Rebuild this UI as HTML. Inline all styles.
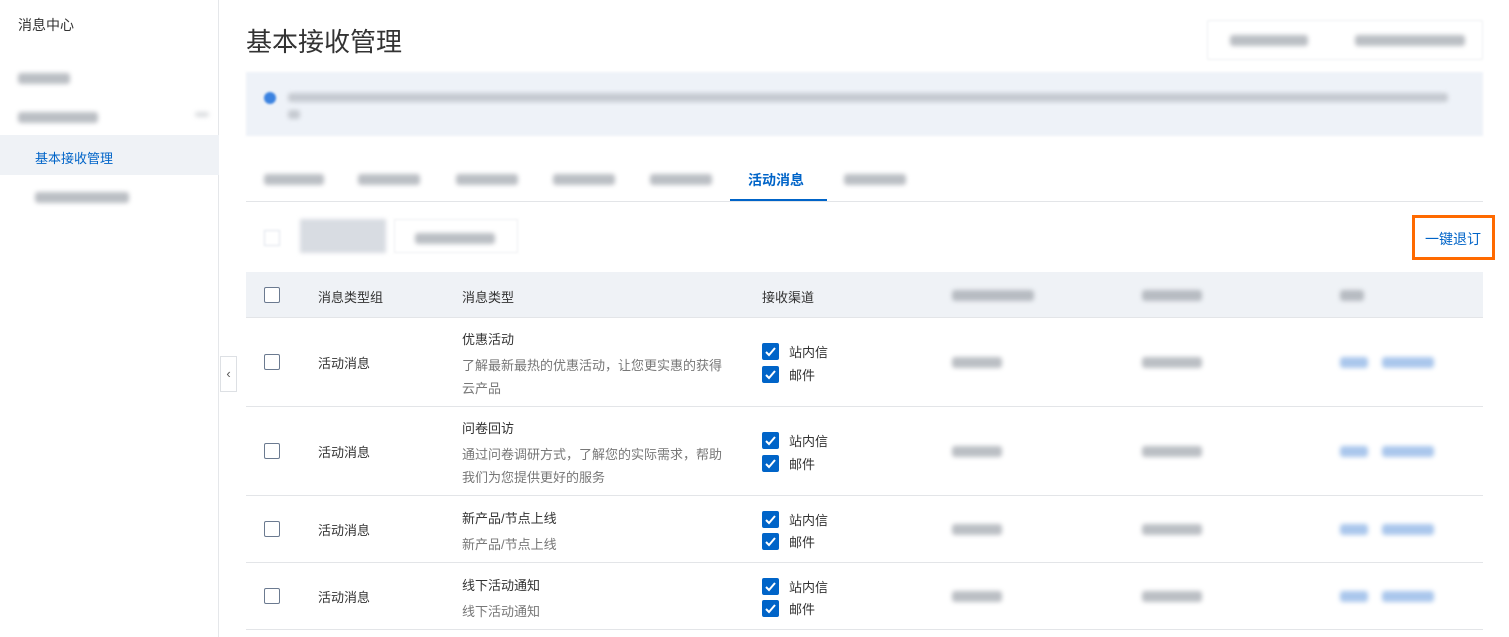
<!DOCTYPE html>
<html><head><meta charset="utf-8"><style>
*{margin:0;padding:0;box-sizing:border-box}
body{width:1509px;height:637px;overflow:hidden;background:#fff;font-family:"Liberation Sans","Noto Sans CJK SC",sans-serif;color:#333;font-size:13px;position:relative}
.a{position:absolute}
.bl{position:absolute;background:#a4a9b0;filter:blur(2.5px);height:11px;border-radius:3px;opacity:.75;margin-top:-1px}
.blb{position:absolute;background:#8db4e6;filter:blur(2.5px);height:11px;border-radius:3px;opacity:.75;margin-top:-1px}
.cb{position:absolute;width:16px;height:16px;border:1px solid #6b7a90;border-radius:2px;background:#fff}
.ck{position:absolute;width:17px;height:17px;background:#0064c8;border-radius:2px}
.ck svg{position:absolute;left:2px;top:2px}
.line{position:absolute;left:246px;width:1237px;height:1px;background:#e3e5e8}
</style></head><body>
<div class="a" style="left:0;top:0;width:219px;height:637px;border-right:1px solid #e5e7ea"></div>
<div class="a" style="left:18px;top:15px;font-size:14px;color:#333">消息中心</div>
<div class="bl" style="left:18px;top:74px;width:52px"></div>
<div class="bl" style="left:18px;top:113px;width:80px"></div>
<div class="bl" style="left:195px;top:113px;width:14px;height:5px;opacity:.4"></div>
<div class="a" style="left:0;top:135px;width:219px;height:40px;background:#eff2f6"></div>
<div class="a" style="left:35px;top:148px;font-size:13px;color:#0064c8">基本接收管理</div>
<div class="bl" style="left:35px;top:193px;width:94px"></div>
<div class="a" style="left:220px;top:356px;width:17px;height:36px;border:1px solid #dde0e4;background:#fff;font-size:13px;line-height:34px;text-align:center;color:#555">‹</div>

<div class="a" style="left:246px;top:22px;font-size:26px;color:#333">基本接收管理</div>
<div class="a" style="left:1207px;top:20px;width:276px;height:40px;border:1px solid #eceef0;border-radius:2px;filter:blur(1px)"></div>
<div class="bl" style="left:1230px;top:36px;width:78px"></div>
<div class="bl" style="left:1355px;top:36px;width:110px"></div>
<div class="a" style="left:246px;top:72px;width:1237px;height:64px;background:#eef2f8;filter:blur(1px)"></div>
<div class="a" style="left:264px;top:92px;width:12px;height:12px;border-radius:50%;background:#3b82e0;filter:blur(1px)"></div>
<div class="bl" style="left:288px;top:94px;width:1160px;height:9px;opacity:.55"></div>
<div class="bl" style="left:288px;top:111px;width:12px;height:9px;opacity:.55"></div>

<div class="bl" style="left:264px;top:175px;width:60px"></div>
<div class="bl" style="left:358px;top:175px;width:62px"></div>
<div class="bl" style="left:456px;top:175px;width:62px"></div>
<div class="bl" style="left:553px;top:175px;width:62px"></div>
<div class="bl" style="left:650px;top:175px;width:62px"></div>
<div class="a" style="left:748px;top:170px;font-size:14px;font-weight:bold;color:#0064c8">活动消息</div>
<div class="bl" style="left:844px;top:175px;width:62px"></div>
<div class="line" style="top:201px"></div>
<div class="a" style="left:730px;top:199px;width:97px;height:2px;background:#0064c8"></div>

<div class="a" style="left:264px;top:230px;width:16px;height:16px;border:1px solid #dde2ea;filter:blur(1px)"></div>
<div class="a" style="left:300px;top:219px;width:86px;height:34px;background:#d8dce2;filter:blur(2px)"></div>
<div class="a" style="left:394px;top:219px;width:124px;height:34px;border:1px solid #eceef0;filter:blur(1px)"></div>
<div class="bl" style="left:415px;top:234px;width:80px"></div>
<div class="a" style="left:1412px;top:215px;width:83px;height:45px;border:3px solid #ff6a00"></div>
<div class="a" style="left:1425px;top:229px;font-size:14px;color:#0064c8">一键退订</div>

<div class="a" style="left:246px;top:272px;width:1237px;height:45px;background:#eff2f6"></div>
<div class="line" style="top:317px"></div>
<div class="cb" style="left:264px;top:287px"></div>
<div class="a" style="left:318px;top:287px">消息类型组</div>
<div class="a" style="left:462px;top:287px">消息类型</div>
<div class="a" style="left:762px;top:287px">接收渠道</div>
<div class="bl" style="left:952px;top:291px;width:82px"></div>
<div class="bl" style="left:1142px;top:291px;width:60px"></div>
<div class="bl" style="left:1340px;top:291px;width:24px"></div>

<div class="line" style="top:406px"></div>
<div class="line" style="top:495px"></div>
<div class="line" style="top:562px"></div>
<div class="line" style="top:629px"></div>

<div class="cb" style="left:264px;top:354px"></div>
<div class="a" style="left:318px;top:353px">活动消息</div>
<div class="a" style="left:462px;top:329px">优惠活动</div>
<div class="a" style="left:462px;top:354px;color:#777;line-height:23px;width:280px">了解最新最热的优惠活动，让您更实惠的获得<br>云产品</div>
<div class="ck" style="left:762px;top:343px"><svg width="13" height="13"><path d="M2 7l3 3 6-7" stroke="#fff" stroke-width="2" fill="none"/></svg></div>
<div class="a" style="left:789px;top:342px">站内信</div>
<div class="ck" style="left:762px;top:366px"><svg width="13" height="13"><path d="M2 7l3 3 6-7" stroke="#fff" stroke-width="2" fill="none"/></svg></div>
<div class="a" style="left:789px;top:365px">邮件</div>

<div class="cb" style="left:264px;top:443px"></div>
<div class="a" style="left:318px;top:442px">活动消息</div>
<div class="a" style="left:462px;top:418px">问卷回访</div>
<div class="a" style="left:462px;top:443px;color:#777;line-height:23px;width:280px">通过问卷调研方式，了解您的实际需求，帮助<br>我们为您提供更好的服务</div>
<div class="ck" style="left:762px;top:432px"><svg width="13" height="13"><path d="M2 7l3 3 6-7" stroke="#fff" stroke-width="2" fill="none"/></svg></div>
<div class="a" style="left:789px;top:431px">站内信</div>
<div class="ck" style="left:762px;top:455px"><svg width="13" height="13"><path d="M2 7l3 3 6-7" stroke="#fff" stroke-width="2" fill="none"/></svg></div>
<div class="a" style="left:789px;top:454px">邮件</div>

<div class="cb" style="left:264px;top:521px"></div>
<div class="a" style="left:318px;top:520px">活动消息</div>
<div class="a" style="left:462px;top:508px">新产品/节点上线</div>
<div class="a" style="left:462px;top:534px;color:#777">新产品/节点上线</div>
<div class="ck" style="left:762px;top:511px"><svg width="13" height="13"><path d="M2 7l3 3 6-7" stroke="#fff" stroke-width="2" fill="none"/></svg></div>
<div class="a" style="left:789px;top:510px">站内信</div>
<div class="ck" style="left:762px;top:533px"><svg width="13" height="13"><path d="M2 7l3 3 6-7" stroke="#fff" stroke-width="2" fill="none"/></svg></div>
<div class="a" style="left:789px;top:532px">邮件</div>

<div class="cb" style="left:264px;top:588px"></div>
<div class="a" style="left:318px;top:587px">活动消息</div>
<div class="a" style="left:462px;top:575px">线下活动通知</div>
<div class="a" style="left:462px;top:601px;color:#777">线下活动通知</div>
<div class="ck" style="left:762px;top:578px"><svg width="13" height="13"><path d="M2 7l3 3 6-7" stroke="#fff" stroke-width="2" fill="none"/></svg></div>
<div class="a" style="left:789px;top:577px">站内信</div>
<div class="ck" style="left:762px;top:600px"><svg width="13" height="13"><path d="M2 7l3 3 6-7" stroke="#fff" stroke-width="2" fill="none"/></svg></div>
<div class="a" style="left:789px;top:599px">邮件</div>

<div class="bl" style="left:952px;top:358px;width:50px"></div><div class="bl" style="left:1142px;top:358px;width:60px"></div>
<div class="blb" style="left:1340px;top:358px;width:28px"></div><div class="blb" style="left:1382px;top:358px;width:52px"></div>
<div class="bl" style="left:952px;top:447px;width:50px"></div><div class="bl" style="left:1142px;top:447px;width:60px"></div>
<div class="blb" style="left:1340px;top:447px;width:28px"></div><div class="blb" style="left:1382px;top:447px;width:52px"></div>
<div class="bl" style="left:952px;top:525px;width:50px"></div><div class="bl" style="left:1142px;top:525px;width:60px"></div>
<div class="blb" style="left:1340px;top:525px;width:28px"></div><div class="blb" style="left:1382px;top:525px;width:52px"></div>
<div class="bl" style="left:952px;top:592px;width:50px"></div><div class="bl" style="left:1142px;top:592px;width:60px"></div>
<div class="blb" style="left:1340px;top:592px;width:28px"></div><div class="blb" style="left:1382px;top:592px;width:52px"></div>
</body></html>
